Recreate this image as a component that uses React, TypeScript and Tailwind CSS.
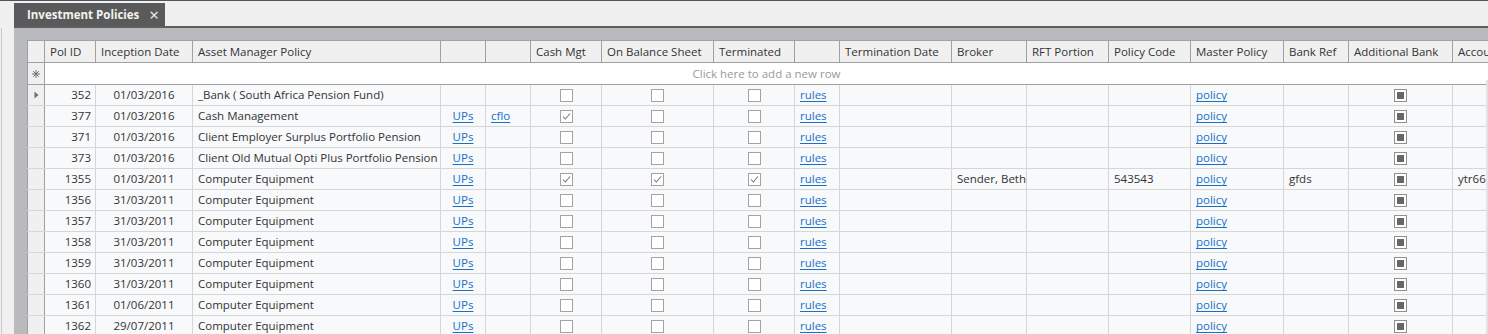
import React from "react";

type Col = { key: string; title: string; w: number; align?: "left" | "center" | "right" };

const cols: Col[] = [
  { key: "id", title: "Pol ID", w: 51, align: "right" },
  { key: "date", title: "Inception Date", w: 97, align: "center" },
  { key: "asset", title: "Asset Manager Policy", w: 248 },
  { key: "ups", title: "", w: 45, align: "center" },
  { key: "cflo", title: "", w: 45 },
  { key: "cash", title: "Cash Mgt", w: 71, align: "center" },
  { key: "obs", title: "On Balance Sheet", w: 112, align: "center" },
  { key: "term", title: "Terminated", w: 81, align: "center" },
  { key: "rules", title: "", w: 45 },
  { key: "termDate", title: "Termination Date", w: 112 },
  { key: "broker", title: "Broker", w: 75 },
  { key: "rft", title: "RFT Portion", w: 82 },
  { key: "code", title: "Policy Code", w: 82 },
  { key: "master", title: "Master Policy", w: 93 },
  { key: "bankRef", title: "Bank Ref", w: 65 },
  { key: "addBank", title: "Additional Bank", w: 104, align: "center" },
  { key: "accou", title: "Account No", w: 110 },
];

type Policy = {
  id: number;
  date: string;
  asset: string;
  ups?: boolean;
  cflo?: boolean;
  cash?: boolean;
  obs?: boolean;
  term?: boolean;
  broker?: string;
  code?: string;
  bankRef?: string;
  accou?: string;
};

const policies: Policy[] = [
  { id: 352, date: "01/03/2016", asset: "_Bank ( South Africa Pension Fund)" },
  { id: 377, date: "01/03/2016", asset: "Cash Management", ups: true, cflo: true, cash: true },
  { id: 371, date: "01/03/2016", asset: "Client Employer Surplus Portfolio Pension", ups: true },
  { id: 373, date: "01/03/2016", asset: "Client Old Mutual Opti Plus Portfolio Pension", ups: true },
  {
    id: 1355,
    date: "01/03/2011",
    asset: "Computer Equipment",
    ups: true,
    cash: true,
    obs: true,
    term: true,
    broker: "Sender, Beth",
    code: "543543",
    bankRef: "gfds",
    accou: "ytr667",
  },
  { id: 1356, date: "31/03/2011", asset: "Computer Equipment", ups: true },
  { id: 1357, date: "31/03/2011", asset: "Computer Equipment", ups: true },
  { id: 1358, date: "31/03/2011", asset: "Computer Equipment", ups: true },
  { id: 1359, date: "31/03/2011", asset: "Computer Equipment", ups: true },
  { id: 1360, date: "31/03/2011", asset: "Computer Equipment", ups: true },
  { id: 1361, date: "01/06/2011", asset: "Computer Equipment", ups: true },
  { id: 1362, date: "29/07/2011", asset: "Computer Equipment", ups: true },
];

function CheckBox({ checked }: { checked?: boolean }) {
  return (
    <span className="w-[13px] h-[13px] border border-[#a3a3a3] bg-white flex items-center justify-center">
      {checked && (
        <svg width="11" height="11" viewBox="0 0 11 11">
          <path d="M2 5.5 L4.3 8 L9 2.5" fill="none" stroke="#7a7a7a" strokeWidth="1.1" />
        </svg>
      )}
    </span>
  );
}

function FilledBox() {
  return (
    <span className="w-[13px] h-[13px] border border-[#8f8f8f] bg-white flex items-center justify-center">
      <span className="w-[7px] h-[7px] bg-[#666666]" />
    </span>
  );
}

function LinkText({ children }: { children: React.ReactNode }) {
  return <span className="text-[#1670c8] underline underline-offset-[2px]">{children}</span>;
}

function cellContent(key: string, p: Policy) {
  switch (key) {
    case "id":
      return p.id;
    case "date":
      return p.date;
    case "asset":
      return p.asset;
    case "ups":
      return p.ups ? <LinkText>UPs</LinkText> : null;
    case "cflo":
      return p.cflo ? <LinkText>cflo</LinkText> : null;
    case "cash":
      return <CheckBox checked={p.cash} />;
    case "obs":
      return <CheckBox checked={p.obs} />;
    case "term":
      return <CheckBox checked={p.term} />;
    case "rules":
      return <LinkText>rules</LinkText>;
    case "broker":
      return p.broker;
    case "code":
      return p.code;
    case "master":
      return <LinkText>policy</LinkText>;
    case "bankRef":
      return p.bankRef;
    case "addBank":
      return <FilledBox />;
    case "accou":
      return p.accou;
    default:
      return null;
  }
}

const justify = (a?: string) =>
  a === "right" ? "justify-end pr-[4px]" : a === "center" ? "justify-center" : "justify-start pl-[5px]";

export default function App() {
  return (
    <div
      className="relative w-[1488px] h-[334px] overflow-hidden bg-[#f0f0f0] text-[11.5px] text-[#333333]"
      style={{ fontFamily: '"Open Sans", "Noto Sans", sans-serif' }}
    >
      <div className="h-[1px] bg-[#4d555e]" />
      {/* tab strip */}
      <div className="h-[25px] flex items-end pl-[14px]">
        <div className="h-[23px] w-[151px] bg-[#5a5a5a] flex items-center pl-[13px] text-[#f2f2f2] font-bold">
          <span>Investment Policies</span>
          <span className="ml-[10px] text-[17px] font-normal leading-none">×</span>
        </div>
      </div>
      <div className="h-[2px] bg-[#5e5f61] ml-[14px]" />

      <div className="flex h-[306px]">
        <div className="w-[14px] flex">
          <div className="w-[1px]" />
          <div className="w-[1px] bg-[#c9c9c9]" />
        </div>
        <div className="flex-1 bg-[#b9babd] pl-[13px] pt-[12px] overflow-hidden">
          <div className="w-max bg-[#f8f9fb]">
            {/* header */}
            <div className="flex h-[23px] bg-[#f0f0f0] border-t border-[#a0a0a0] border-b border-[#a0a0a0]">
              <div className="w-[18px] border-r border-l border-[#a0a0a0]" />
              {cols.map((c) => (
                <div
                  key={c.key}
                  style={{ width: c.w }}
                  className="shrink-0 border-r border-[#a0a0a0] flex items-center pl-[5px] whitespace-nowrap overflow-hidden"
                >
                  {c.title}
                </div>
              ))}
            </div>
            {/* new row */}
            <div className="flex h-[22px] bg-white border-b border-[#a0a0a0]">
              <div className="w-[18px] bg-[#f0f0f0] border-r border-l border-[#a0a0a0] flex items-center justify-center">
                <svg width="8" height="8" viewBox="0 0 8 8">
                  <g stroke="#707070" strokeWidth="1">
                    <path d="M4 0 V8 M0 4 H8 M1.2 1.2 L6.8 6.8 M6.8 1.2 L1.2 6.8" />
                  </g>
                </svg>
              </div>
              <div className="w-[1443px] flex items-center justify-center text-[#9a9a9a]">
                Click here to add a new row
              </div>
            </div>
            {/* data rows */}
            {policies.map((p, i) => (
              <div key={p.id} className="flex h-[21px] border-b border-[#d6d6d6]">
                <div className="w-[18px] bg-[#f0f0f0] border-r border-l border-[#a0a0a0] flex items-center justify-center">
                  {i === 0 && (
                    <svg width="5" height="8" viewBox="0 0 5 8">
                      <path d="M0.5 0.5 L4.5 4 L0.5 7.5 Z" fill="#707070" />
                    </svg>
                  )}
                </div>
                {cols.map((c) => (
                  <div
                    key={c.key}
                    style={{ width: c.w }}
                    className={`shrink-0 border-r border-[#d6d6d6] flex items-center whitespace-nowrap overflow-hidden ${justify(c.align)}`}
                  >
                    {cellContent(c.key, p)}
                  </div>
                ))}
              </div>
            ))}
          </div>
        </div>
      </div>
      {/* vertical scrollbar track */}
      <div className="absolute right-0 top-[80px] bottom-0 w-[2px] bg-[#e2e2e2]" />
    </div>
  );
}
